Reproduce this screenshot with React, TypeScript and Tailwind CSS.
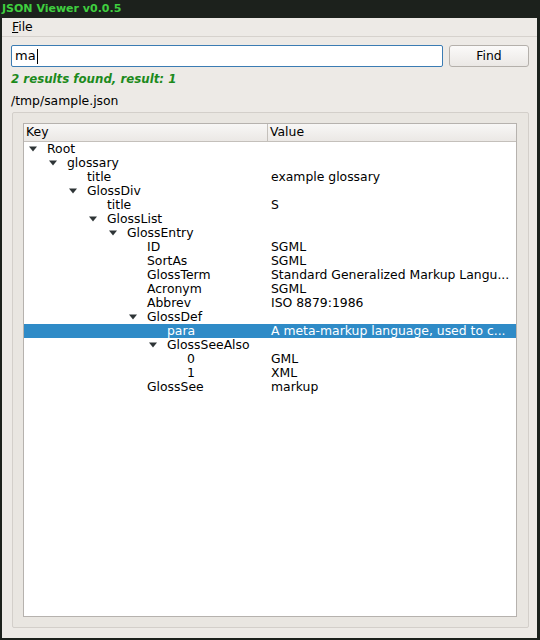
import React from 'react';

interface Row {
  key: string;
  value?: string;
  level: number;
  expanded?: boolean;
  selected?: boolean;
}

const rows: Row[] = [
  { key: 'Root', level: 0, expanded: true },
  { key: 'glossary', level: 1, expanded: true },
  { key: 'title', value: 'example glossary', level: 2 },
  { key: 'GlossDiv', level: 2, expanded: true },
  { key: 'title', value: 'S', level: 3 },
  { key: 'GlossList', level: 3, expanded: true },
  { key: 'GlossEntry', level: 4, expanded: true },
  { key: 'ID', value: 'SGML', level: 5 },
  { key: 'SortAs', value: 'SGML', level: 5 },
  { key: 'GlossTerm', value: 'Standard Generalized Markup Langu...', level: 5 },
  { key: 'Acronym', value: 'SGML', level: 5 },
  { key: 'Abbrev', value: 'ISO 8879:1986', level: 5 },
  { key: 'GlossDef', level: 5, expanded: true },
  { key: 'para', value: 'A meta-markup language, used to c...', level: 6, selected: true },
  { key: 'GlossSeeAlso', level: 6, expanded: true },
  { key: '0', value: 'GML', level: 7 },
  { key: '1', value: 'XML', level: 7 },
  { key: 'GlossSee', value: 'markup', level: 5 },
];

function Arrow({ light }: { light?: boolean }) {
  return (
    <svg width="9" height="6" viewBox="0 0 9 6" className="shrink-0">
      <polygon points="0,0.5 8,0.5 4,5.5" fill={light ? '#ffffff' : '#2e3436'} />
    </svg>
  );
}

export default function App() {
  return (
    <div className="w-[540px] h-[640px] bg-[#1c211c] flex flex-col font-['DejaVu_Sans',sans-serif] text-[12.4px] text-black">
      {/* title bar */}
      <div className="h-[18px] pl-[2px] flex items-center text-[11px] font-bold text-[#3fcf3f]">
        JSON Viewer v0.0.5
      </div>

      <div className="flex-1 ml-[2px] mr-[3px] mb-[2px] bg-[#edeae6] flex flex-col">
        {/* menu */}
        <div className="h-[19px] border-b border-[#d6d2cd] flex items-center pl-[10px]">
          <span><span className="underline">F</span>ile</span>
        </div>

        <div className="flex-1 flex flex-col pl-[9px] pr-[8px] pt-[8px] pb-[10px]">
          {/* search row */}
          <div className="flex gap-[6px] h-[22px]">
            <div className="w-[432px] h-full bg-white border border-[#3b7cb3] rounded-[2px] flex items-center pl-[3px] text-[13px]">
              <span>ma</span>
              <span className="w-px h-[15px] bg-black ml-px" />
            </div>
            <div className="w-[80px] h-full rounded-[3px] border border-[#b4b0ab] bg-gradient-to-b from-[#fbfaf9] to-[#ebe8e5] flex items-center justify-center">
              Find
            </div>
          </div>

          <div className="h-[14px] mt-[6px] flex items-center font-bold italic text-[#1c8a1c] text-[11.8px]">
            2 results found, result: 1
          </div>
          <div className="h-[14px] mt-[7px] flex items-center">/tmp/sample.json</div>

          {/* group box */}
          <div className="flex-1 mt-[4px] ml-px border border-[#d3cfca] rounded-[2px] bg-[#e9e6e1] pl-[10px] pr-[11px] pt-[10px] pb-[10px] flex">
            <div className="flex-1 bg-white border border-[#b6b2ae] flex flex-col">
              {/* header */}
              <div className="h-[18px] border-b border-[#c4c0bb] bg-gradient-to-b from-[#f8f7f6] to-[#ebe8e5] flex">
                <div className="w-[244px] border-r border-[#c4c0bb] pl-[2px] flex items-center">Key</div>
                <div className="flex-1 pl-[2px] flex items-center">Value</div>
              </div>
              {/* rows */}
              <div className="flex flex-col">
                {rows.map((r, i) => (
                  <div
                    key={i}
                    className={`h-[14px] flex items-center leading-[14px] ${r.selected ? 'bg-[#2f8bc7] text-white' : ''}`}
                  >
                    <div className="w-[244px] flex items-center" style={{ paddingLeft: 5 + r.level * 20 }}>
                      <div className="w-[18px] flex items-center">{r.expanded && <Arrow light={r.selected} />}</div>
                      <span>{r.key}</span>
                    </div>
                    <div className="flex-1 pl-[3px] whitespace-nowrap overflow-hidden">{r.value ?? ''}</div>
                  </div>
                ))}
              </div>
            </div>
          </div>
        </div>
      </div>
    </div>
  );
}
